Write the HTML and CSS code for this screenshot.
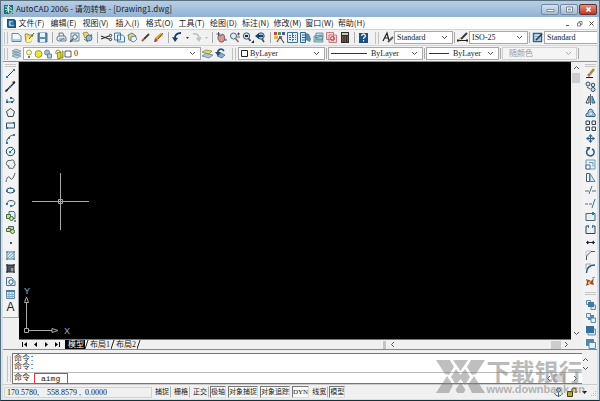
FILE: index.html
```html
<!DOCTYPE html>
<html lang="zh-CN">
<head>
  <meta charset="UTF-8" />
  <title>AutoCAD 2006 - 请勿转售 - [Drawing1.dwg]</title>
  <link rel="stylesheet" href="styles.css">
</head>
<body>
  <div class="window">
    <header class="titlebar">
      <svg class="app-icon" viewBox="0 0 10 10"><path fill="#16706f" d="M0 0h10v10H0z"/><path fill="none" stroke="#d8f0ea" d="M1 2h3v3H1M5 1l4 3M2 8l5-4M6 6h3v3H6M5 0v9"/></svg>
      <h1 class="title">AutoCAD 2006 - 请勿转售 - [Drawing1.dwg]</h1>
      <div class="caption-buttons">
        <button class="cap" aria-label="最小化"><svg viewBox="0 0 9 7"><path fill="#fff" stroke="#5b6b7d" stroke-width=".7" d="M1 3.500h7v2H1z"/></svg></button>
        <button class="cap" aria-label="还原"><svg viewBox="0 0 9 7"><path fill="#fff" stroke="#5b6b7d" stroke-width=".8" d="M1.500 1h6v5h-6zM3.500 3h2v1h-2z"/></svg></button>
        <button class="cap close" aria-label="关闭"><svg viewBox="0 0 9 7"><path fill="none" stroke="#fff" stroke-width="1.700" d="M2.500 1.500l4 4M6.500 1.500l-4 4"/></svg></button>
      </div>
    </header>

    <nav class="menubar">
      <svg class="doc-icon" viewBox="0 0 10 10"><path fill="#1d4f7c" d="M0 0h8l2 2v8H1L0 9z"/><path fill="#8ed0e8" d="M2 2h5v2H4v2h4v2H2z"/><path fill="#2b77a5" d="M5 3h3v4H5z"/></svg>
      <button class="menu">文件(F)</button>
      <button class="menu">编辑(E)</button>
      <button class="menu">视图(V)</button>
      <button class="menu">插入(I)</button>
      <button class="menu">格式(O)</button>
      <button class="menu">工具(T)</button>
      <button class="menu">绘图(D)</button>
      <button class="menu">标注(N)</button>
      <button class="menu">修改(M)</button>
      <button class="menu">窗口(W)</button>
      <button class="menu">帮助(H)</button>
      <div class="doc-buttons">
        <button aria-label="最小化文档"><svg viewBox="0 0 7 7"><path stroke="#555" d="M2 5.500h3"/></svg></button>
        <button aria-label="还原文档"><svg viewBox="0 0 7 7"><path fill="none" stroke="#667" stroke-width=".8" d="M1.500 3h3v3h-3zM3 3V1.500h3v3H4.500"/></svg></button>
        <button aria-label="关闭文档"><svg viewBox="0 0 7 7"><path stroke="#444" d="M1.500 1.500l4 4M5.500 1.500l-4 4"/></svg></button>
      </div>
    </nav>

    <div class="toolbar">
      <span class="grip"></span>
      <button class="tool" aria-label="新建"><svg viewBox="0 0 13 13"><path fill="#f4fbff" stroke="#4f7aa0" stroke-width=".9" d="M2 2.500h6l3 2.500v5.500H2z"/><path fill="#a9cfe6" d="M3 8h7v2H3z"/></svg></button>
      <button class="tool" aria-label="打开"><svg viewBox="0 0 13 13"><path fill="#efd766" stroke="#8e7a22" stroke-width=".8" d="M2 3h3l1 1h4l-2 7H3z"/><path fill="#fbf1a8" d="M5 6h6l-3 5H3z"/><path stroke="#3a6b35" d="M6 8l5-6"/></svg></button>
      <button class="tool" aria-label="保存"><svg viewBox="0 0 13 13"><path fill="#5c8fb8" stroke="#2e5c86" stroke-width=".8" d="M2 2h9v9H2z"/><path fill="#e6f2f9" d="M4 2h5v4H4zM4 8h5v3H4z"/></svg></button>
      <span class="sep"></span>
      <button class="tool" aria-label="打印"><svg viewBox="0 0 13 13"><path fill="#e5ebf0" stroke="#51606e" stroke-width=".8" d="M4 5V2h4l1 3M2 6l2-1h6l1 2v3H3L2 9z"/><path stroke="#5686ae" d="M4 8h6M5 10l4-3"/></svg></button>
      <button class="tool" aria-label="打印预览"><svg viewBox="0 0 13 13"><path fill="#e2f1f8" stroke="#3c739c" stroke-width=".8" d="M3 2h8v8H3z"/><circle cx="7" cy="6" r="2.300" fill="#fff" stroke="#4d6070"/><path stroke="#555" stroke-width="1.400" d="M5 8l-3 3"/></svg></button>
      <button class="tool" aria-label="发布"><svg viewBox="0 0 13 13"><path fill="#efdc6a" stroke="#806d2b" stroke-width=".7" d="M2 2l4-1 2 3-4 3z"/><circle cx="8" cy="7" r="3" fill="#8fb9d5" stroke="#35617f" stroke-width=".8"/><path stroke="#806d2b" d="M3 8l4 3M10 3l1 2"/></svg></button>
      <span class="sep"></span>
      <button class="tool" aria-label="剪切"><svg viewBox="0 0 13 13"><path stroke="#333" stroke-width="1.200" d="M1 5l8 3M1 8l8-3"/><g fill="none" stroke="#333"><circle cx="10.500" cy="4.500" r="1.200"/><circle cx="10.500" cy="8.500" r="1.200"/></g></svg></button>
      <button class="tool" aria-label="复制"><svg viewBox="0 0 13 13"><path fill="#e6f3fa" stroke="#35709c" stroke-width=".9" d="M1.500 2h6v7h-6zM4.500 4h5l2 2v5h-7z"/></svg></button>
      <button class="tool" aria-label="粘贴"><svg viewBox="0 0 13 13"><path fill="#d6d49b" stroke="#666539" stroke-width=".8" d="M2 4l4-2 4 3-2 5-5-1z"/><path fill="#edf5fa" stroke="#45708e" stroke-width=".8" d="M5 6l4-1 2 3-3 3-3-1z"/></svg></button>
      <button class="tool" aria-label="特性匹配"><svg viewBox="0 0 13 13"><path stroke="#4b3a32" stroke-width="1.800" d="M5 8l5-5"/><path stroke="#a05b32" stroke-width="2" d="M3 10l2-2"/></svg></button>
      <button class="tool" aria-label="块编辑器"><svg viewBox="0 0 13 13"><path stroke="#d7ab29" stroke-width="3" d="M4 8l6-5"/><path stroke="#6b482f" d="M6 8l5-6"/><path fill="#bc4634" d="M2 11l1-4 3 2-2 2z"/></svg></button>
      <span class="sep"></span>
      <button class="tool" aria-label="放弃"><svg viewBox="0 0 13 13"><path fill="none" stroke="#173f72" stroke-width="1.800" d="M10 2C6 2 3.500 4 4 8"/><path fill="#173f72" d="M1 6l3 5 3-4z"/></svg></button>
      <button class="tool drop" aria-label="放弃列表"><svg viewBox="0 0 6 13"><path fill="#333" d="M2 6h3L3.500 8z"/></svg></button>
      <button class="tool" aria-label="重做"><svg viewBox="0 0 13 13"><path fill="none" stroke="#bbc1c8" stroke-width="1.600" d="M3 3c4-1 6 1 6 5"/><path fill="#bbc1c8" d="M6 7l3 4 3-5z"/></svg></button>
      <button class="tool drop" aria-label="重做列表"><svg viewBox="0 0 6 13"><path fill="#bbb" d="M2 6h3L3.500 8z"/></svg></button>
      <span class="sep"></span>
      <button class="tool" aria-label="实时平移"><svg viewBox="0 0 13 13"><path fill="#d99b91" stroke="#7b4344" stroke-width=".8" d="M3 5l1-1 2 1 1-2 2 1 1 4-2 3H5L3 8z"/><path stroke="#384f70" d="M1.500 3h4M3.500 1v4M9 9h3"/></svg></button>
      <button class="tool" aria-label="实时缩放"><svg viewBox="0 0 13 13"><circle cx="5.500" cy="5" r="3" fill="#dcedf8" stroke="#476987"/><path stroke="#916c42" stroke-width="1.600" d="M7.500 7.500l3 3.500"/><path stroke="#333" stroke-width=".8" d="M9 3h3M10.500 1.500v3M9 6h3"/></svg></button>
      <button class="tool" aria-label="窗口缩放"><svg viewBox="0 0 13 13"><circle cx="5.500" cy="5" r="3.200" fill="#c7e0f0" stroke="#365c7e"/><path stroke="#4a4b52" stroke-width="1.600" d="M7.500 7.500l2 2.500"/><path fill="#223" d="M4 4h3v2H4zM10 12h3V9z"/></svg></button>
      <button class="tool" aria-label="缩放上一个"><svg viewBox="0 0 13 13"><circle cx="7" cy="5" r="3.200" fill="#9cc7df" stroke="#315675"/><path stroke="#49494e" stroke-width="1.600" d="M8 8l2 3"/><path fill="#123f6b" d="M1 5l4-3v2h4v2H5v2z"/></svg></button>
      <span class="sep"></span>
      <button class="tool" aria-label="特性"><svg viewBox="0 0 13 13"><path fill="#cf4447" d="M1 1h3v3H1z"/><path fill="#4a9a58" d="M5 1h3v3H5z"/><path fill="#4356a8" d="M9 1h3v3H9z"/><path fill="#dcba35" d="M1 5h4v3H1z"/><path fill="#ba4d95" d="M6 5h3v3H6z"/><path fill="none" stroke="#555" stroke-width="1.200" d="M4 11l3-5 4 6"/></svg></button>
      <button class="tool" aria-label="设计中心"><svg viewBox="0 0 13 13"><path fill="#e3f0f6" stroke="#3f7194" d="M1.500 1.500h10v10h-10z"/><path stroke="#45718e" stroke-dasharray="2 1" d="M3 4.500h7M3 6.500h7M3 8.500h7M6.500 2v9"/></svg></button>
      <button class="tool" aria-label="工具选项板"><svg viewBox="0 0 13 13"><path fill="#d7eaf4" stroke="#2b648e" d="M1.500 1.500h5v10h-5z"/><path fill="#5988ad" d="M7 2l3 1 2 5-1 3-4-2z"/><path stroke="#2b648e" d="M3 4h3M3 6.500h3M3 9h3"/></svg></button>
      <button class="tool" aria-label="图纸集"><svg viewBox="0 0 13 13"><path fill="#c2dcea" stroke="#55809e" stroke-width=".8" d="M4 2h7v6H4zM2 5l8-1 1 7H2z"/><path stroke="#538b73" d="M3 7l7-2M3 9h7"/></svg></button>
      <button class="tool" aria-label="标记集"><svg viewBox="0 0 13 13"><path fill="#f5d6d6" stroke="#cf7b80" d="M1.500 1.500h7v7h-7zM4 4h7.500v7.500H4z"/><circle cx="7.500" cy="7.500" r="2" fill="none" stroke="#c3444e"/></svg></button>
      <button class="tool" aria-label="计算器"><svg viewBox="0 0 13 13"><path fill="#302c2b" d="M3 1h8v11H3z"/><path fill="#b8d8a9" d="M4 2h6v2H4z"/><path stroke="#c97769" stroke-dasharray="1.500 1" d="M4 6h6M4 8h6M4 10h6"/></svg></button>
      <span class="sep"></span>
      <button class="tool" aria-label="帮助"><svg viewBox="0 0 13 13"><path fill="#1b4f85" d="M2 2h9v10H2z"/><path fill="none" stroke="#fff" stroke-width="1.200" d="M4.700 5c0-3 4-2 3.600.3-.3 1.200-1.800 1-1.800 2.700M6.500 9v1.500"/></svg></button>
      <span class="grip wide"></span>
      <button class="tool" aria-label="文字样式"><svg viewBox="0 0 13 13"><path fill="none" stroke="#222" stroke-width="1.200" d="M2 10l4-8 2 8M3 7h5"/><path stroke="#555" stroke-width="1.800" d="M7 11l5-5"/></svg></button>
      <span class="combo style-combo"><select aria-label="文字样式"><option>Standard</option></select><svg class="chev" viewBox="0 0 7 5"><path d="M1 1l2.500 2.500L6 1"/></svg></span>
      <span class="sep thin"></span>
      <button class="tool" aria-label="标注样式"><svg viewBox="0 0 13 13"><path stroke="#222" d="M1 9.500h11M2 8v3M11 8v3"/><path stroke="#3c3b3b" stroke-width="2" d="M5 8l6-6"/><path stroke="#b59a4a" d="M2 9l3-2"/></svg></button>
      <span class="combo style-combo"><select aria-label="标注样式"><option>ISO-25</option></select><svg class="chev" viewBox="0 0 7 5"><path d="M1 1l2.500 2.500L6 1"/></svg></span>
      <span class="sep thin"></span>
      <button class="tool" aria-label="表格样式"><svg viewBox="0 0 13 13"><path fill="#cfe5f3" stroke="#2d6692" stroke-width="1.400" d="M2.500 2.500h8v8h-8z"/><path stroke="#7ba8c8" d="M3 5.500h7M3 8h7"/><path stroke="#353535" stroke-width="1.600" d="M5 9l6-6"/></svg></button>
      <span class="combo cut-combo"><select aria-label="表格样式"><option>Standard</option></select></span>
    </div>

    <div class="toolbar second">
      <span class="grip"></span>
      <button class="tool" aria-label="图层特性管理器"><svg viewBox="0 0 13 13"><path fill="#bdd2df" stroke="#6687a0" stroke-width=".7" d="M2 9l4-2 5 2-4 2zM2 6.500l4-2 5 2-4 2zM2 4l4-2 5 2-4 2z"/></svg></button>
      <span class="combo layer-combo">
        <svg class="layer-state" viewBox="0 0 48 12"><circle cx="5" cy="4.500" r="2.500" fill="#fff9b0" stroke="#a09136" stroke-width=".8"/><path stroke="#777" stroke-width="2" d="M5 8v2"/><circle cx="14.500" cy="6" r="3.500" fill="#f3e631" stroke="#827f3b" stroke-width=".8"/><circle cx="23" cy="4.500" r="2.500" fill="#a4c2ce" stroke="#688795"/><path fill="#b5ccd5" stroke="#688795" d="M23.500 6h4v4h-4z"/><path fill="none" stroke="#8e8a25" d="M32 6V3l2-1 2 1v2"/><path fill="#e3dc34" stroke="#6e6d2a" stroke-width=".8" d="M33 5l4-1v6l-3 1zM38 3h1v7h-2"/><path fill="#fff" stroke="#333" stroke-width=".8" d="M41 3h6v6h-6z"/></svg>
        <select aria-label="图层"><option>0</option></select><svg class="chev" viewBox="0 0 7 5"><path d="M1 1l2.500 2.500L6 1"/></svg></span>
      <button class="tool" aria-label="将对象的图层置为当前"><svg viewBox="0 0 13 13"><path fill="#a9c6d9" stroke="#547c9b" stroke-width=".7" d="M1 9l4-3 7 2-4 3z"/><path fill="#e9d965" stroke="#7d7d38" stroke-width=".7" d="M1 5l4-2 6 1-3 3z"/></svg></button>
      <button class="tool" aria-label="上一个图层"><svg viewBox="0 0 13 13"><path fill="#8babc3" stroke="#456987" stroke-width=".7" d="M3 9l4-3 4 2-3 3z"/><path fill="none" stroke="#234d77" stroke-width="1.600" d="M10 4C7 0 3 3 4 7"/><path fill="#234d77" d="M1 5h6L4 9z"/></svg></button>
      <span class="grip wide"></span>
      <span class="combo color-combo"><svg class="swatch" viewBox="0 0 7 7"><path fill="#fff" stroke="#222" d="M.5.500h6v6h-6z"/></svg><select aria-label="颜色"><option>ByLayer</option></select><svg class="chev" viewBox="0 0 7 5"><path d="M1 1l2.500 2.500L6 1"/></svg></span>
      <span class="sep thin"></span>
      <span class="combo linetype-combo"><span class="line"></span><select aria-label="线型"><option>ByLayer</option></select><svg class="chev" viewBox="0 0 7 5"><path d="M1 1l2.500 2.500L6 1"/></svg></span>
      <span class="sep thin"></span>
      <span class="combo weight-combo"><span class="line"></span><select aria-label="线宽"><option>ByLayer</option></select><svg class="chev" viewBox="0 0 7 5"><path d="M1 1l2.500 2.500L6 1"/></svg></span>
      <span class="sep thin"></span>
      <span class="combo plot-combo"><select aria-label="打印样式" disabled><option>随颜色</option></select><svg class="chev" viewBox="0 0 7 5"><path d="M1 1l2.500 2.500L6 1"/></svg></span>
      <span class="sep thin"></span>
    </div>

    <main class="workspace">
      <div class="sidebar">
        <span class="hgrip"></span>
        <button class="tool" aria-label="直线"><svg viewBox="0 0 13 13"><path stroke="#246" d="M3 10l7-7"/><path fill="#2679ad" d="M2 9h2v2H2zM9 2h2v2H9z"/></svg></button>
        <button class="tool" aria-label="构造线"><svg viewBox="0 0 13 13"><path stroke="#222" stroke-width="1.200" d="M2 11l9-9"/><path fill="#222" d="M1 12l1-3 2 2zM11 1l-1 3-2-2z"/><path fill="#2679ad" d="M5 6h2v2H5z"/></svg></button>
        <button class="tool" aria-label="多段线"><svg viewBox="0 0 13 13"><path fill="none" stroke="#356b95" d="M2 9h7c2-2 1-4-2-4M3 9V6"/><path fill="#246596" d="M2 8h2v2H2zM7 8h2v2H7zM6 4h2v2H6z"/></svg></button>
        <button class="tool" aria-label="正多边形"><svg viewBox="0 0 13 13"><path fill="#edf1f4" stroke="#3f4851" d="M6.500 2.500l4 3-1.500 5H4l-1.500-5z"/></svg></button>
        <button class="tool" aria-label="矩形"><svg viewBox="0 0 13 13"><path fill="#e5f0f6" stroke="#35556e" d="M2.500 4h8v5h-8z"/><path fill="#2679ad" d="M2 8h2v2H2zM9 3h2v2H9z"/></svg></button>
        <button class="tool" aria-label="圆弧"><svg viewBox="0 0 13 13"><path fill="none" stroke="#365b78" d="M2.500 11c0-4 3-8 8-8"/><path fill="#2679ad" d="M2 10h2v2H2zM4 5h2v2H4zM9 2h2v2H9z"/></svg></button>
        <button class="tool" aria-label="圆"><svg viewBox="0 0 13 13"><circle cx="6.500" cy="6.500" r="4.200" fill="#e7f2f7" stroke="#234968"/><path stroke="#2679ad" d="M6 7l3-3"/><path fill="#2679ad" d="M5 6h2v2H5z"/></svg></button>
        <button class="tool" aria-label="修订云线"><svg viewBox="0 0 13 13"><path fill="#edf1f4" stroke="#485663" d="M3 4c0-2 3-2 3-1 2-2 5-1 4 2 2 1 1 3 0 3 0 3-2 3-3 2-2 1-3 0-2-2-3 0-3-3-2-4z"/></svg></button>
        <button class="tool" aria-label="样条曲线"><svg viewBox="0 0 13 13"><path fill="none" stroke="#4d555c" d="M2 11c1-6 3-6 4-4s3 2 5-5"/></svg></button>
        <button class="tool" aria-label="椭圆"><svg viewBox="0 0 13 13"><ellipse cx="6.500" cy="6.500" rx="4" ry="2.500" fill="#edf5fa" stroke="#274a68"/><path fill="#2679ad" d="M2 6h2v2H2zM9 6h2v2H9zM6 3h1v2H6z"/></svg></button>
        <button class="tool" aria-label="椭圆弧"><svg viewBox="0 0 13 13"><path fill="none" stroke="#35536c" d="M3 7c0-5 8-4 8-1 0 2-2 3-4 3"/><path fill="#2679ad" d="M2 6h2v2H2zM6 8h2v2H6z"/></svg></button>
        <button class="tool" aria-label="插入块"><svg viewBox="0 0 13 13"><path fill="#e4eff5" stroke="#477394" d="M5 1.500h5l1 2v5H5z"/><path fill="#d4de73" stroke="#3d6c41" d="M2.500 4.500h4v4h-4z"/><circle cx="7.500" cy="8.500" r="2" fill="#c3dd94" stroke="#3d6c41"/><path stroke="#222" d="M10 11h2"/></svg></button>
        <button class="tool" aria-label="创建块"><svg viewBox="0 0 13 13"><path fill="#b5c7d3" stroke="#4c6573" d="M4.500 3.500h5v3h-5z"/><path fill="#dfe36d" stroke="#49713a" d="M2.500 5.500h4v3h-4z"/><circle cx="8.500" cy="8.500" r="2" fill="#d3e09a" stroke="#49713a"/></svg></button>
        <button class="tool" aria-label="点"><svg viewBox="0 0 13 13"><path fill="#245b80" d="M6 6h2v2H6z"/></svg></button>
        <button class="tool" aria-label="图案填充"><svg viewBox="0 0 13 13"><path fill="#bdddec" stroke="#467695" d="M3 2v9M10 2v9M2 3h9M2 10h9"/><path fill="#cfe6f1" d="M4 4h5v5H4z"/><path stroke="#79a9c4" d="M4 9l5-5M4 6l2-2M7 9l2-2"/></svg></button>
        <button class="tool" aria-label="渐变色"><svg viewBox="0 0 13 13"><path fill="#485563" d="M3 3h7v7H3z"/><path fill="#a29d78" d="M7 6h3v4H7z"/><path stroke="#222b34" d="M3 2v9M10 2v9M2 3h9M2 10h9"/></svg></button>
        <button class="tool" aria-label="面域"><svg viewBox="0 0 13 13"><path fill="#e4f0f7" stroke="#4b7899" d="M2.500 2.500h5l3.500 4v4H2.500z"/><circle cx="7" cy="7" r="2.200" fill="#fff" stroke="#355f83"/></svg></button>
        <button class="tool" aria-label="表格"><svg viewBox="0 0 13 13"><path fill="#dcebf4" stroke="#5687b0" d="M2.500 2.500h8v8h-8z"/><path fill="#497fab" d="M2 2h9v2H2z"/><path stroke="#82abc7" d="M2 6.500h9M2 8.500h9M5 4v6M8 4v6"/></svg></button>
        <button class="tool letter" aria-label="多行文字">A</button>
      </div>

      <section class="drawing">
        <div class="canvas">
          <svg class="crosshair" viewBox="0 0 57 57"><path d="M0 28.500h57M28.500 0v57M26.500 26.500h4v4h-4z"/></svg>
          <svg class="ucs" viewBox="0 0 50 50"><path d="M2.500 45.500h4v-4h-4zM4.500 41V15M2.500 15.500L4.500 10 6.500 15.500zM7 43.500h23M30 41.500l6 2-6 2z"/><text x="2" y="7">Y</text><text x="42" y="47">X</text></svg>
        </div>
        <div class="vscroll">
          <button aria-label="向上"><svg viewBox="0 0 7 5"><path d="M1 4l2.500-2.500L6 4"/></svg></button>
          <span class="thumb"></span>
          <button class="down" aria-label="向下"><svg viewBox="0 0 7 5"><path d="M1 1l2.500 2.500L6 1"/></svg></button>
        </div>
        <div class="tabs">
          <button class="step" aria-label="第一个"><svg viewBox="0 0 7 7"><path d="M1 1h1v5H1zM6 1v5L3 3.500z"/></svg></button>
          <button class="step" aria-label="上一个"><svg viewBox="0 0 7 7"><path d="M5 1v5L2 3.500z"/></svg></button>
          <button class="step" aria-label="下一个"><svg viewBox="0 0 7 7"><path d="M2 1v5l3-2.500z"/></svg></button>
          <button class="step" aria-label="最后一个"><svg viewBox="0 0 7 7"><path d="M1 1v5l3-2.500zM5 1h1v5H5z"/></svg></button>
          <button class="tab active">模型</button><svg class="slash" viewBox="0 0 4 9"><path d="M0 9l3-9"/></svg>
          <button class="tab">布局1</button><svg class="slash" viewBox="0 0 4 9"><path d="M0 9l3-9"/></svg>
          <button class="tab">布局2</button><svg class="slash" viewBox="0 0 4 9"><path d="M0 9l3-9"/></svg>
          <div class="hscroll">
            <span class="splitter"></span>
            <button aria-label="向左"><svg viewBox="0 0 5 7"><path d="M4 1L1.500 3.500 4 6"/></svg></button>
            <span class="thumb"></span>
            <button aria-label="向右"><svg viewBox="0 0 5 7"><path d="M1 1l2.500 2.500L1 6"/></svg></button>
          </div>
        </div>
        <span class="corner"></span>
      </section>

      <div class="sidebar right">
        <span class="hgrip"></span>
        <button class="tool" aria-label="删除"><svg viewBox="0 0 13 13"><path stroke="#9b8f3a" stroke-width="2.500" d="M6 7l4-5"/><path stroke="#c26a67" stroke-width="2.500" d="M4 9l2-2"/><path stroke="#222" d="M2 10.500h7"/></svg></button>
        <button class="tool" aria-label="复制对象"><svg viewBox="0 0 13 13"><g fill="#cfe4ef" stroke="#344f65"><circle cx="4" cy="4" r="2"/><circle cx="9" cy="5" r="1.800"/><circle cx="9" cy="9.500" r="2"/></g><path stroke="#344f65" d="M3 7l3 2"/></svg></button>
        <button class="tool" aria-label="镜像"><svg viewBox="0 0 13 13"><path fill="#fff" stroke="#33475a" d="M5 3v7H2z"/><path fill="#83b3d1" stroke="#33668e" d="M8 3v7h3z"/><path stroke="#33475a" stroke-width=".8" d="M6.500 1v11"/></svg></button>
        <button class="tool" aria-label="偏移"><svg viewBox="0 0 13 13"><path fill="#a9cde1" stroke="#35658a" d="M2 10.500V8l2-1c0-5 5-5 5-1l2 2v2.500z"/><path fill="#eef6fa" stroke="#6796b5" stroke-width=".7" d="M4 9l2-3h2l1 3z"/></svg></button>
        <button class="tool" aria-label="阵列"><svg viewBox="0 0 13 13"><path fill="#eef3f6" stroke="#333f4a" d="M2 2h3.500v3.500H2zM8 2h3.500v3.500H8zM2 8h3.500v3.500H2zM8 8h3.500v3.500H8z"/></svg></button>
        <button class="tool" aria-label="移动"><svg viewBox="0 0 13 13"><path stroke="#285c87" stroke-width="1.200" d="M6.500 3v7M3 6.500h7"/><path fill="#285c87" d="M6.500 2l2 2.500h-4zM6.500 11l2-2.500h-4zM2 6.500l2.500-2v4zM11 6.500l-2.500-2v4z"/></svg></button>
        <button class="tool" aria-label="旋转"><svg viewBox="0 0 13 13"><path fill="none" stroke="#285c87" stroke-width="1.400" d="M4 4c-3 3-1 7 3 7 4-1 4-6 1-7"/><path fill="#285c87" d="M2 2h4.500L5 5.500z"/></svg></button>
        <button class="tool" aria-label="缩放"><svg viewBox="0 0 13 13"><path fill="#e4f1f7" stroke="#6c99b5" d="M2 2h9v9H2z"/><path fill="#fff" stroke="#3e6c8c" d="M2 7h4v4H2z"/><path fill="none" stroke="#6c99b5" d="M5 4.500h4v4"/></svg></button>
        <button class="tool" aria-label="拉伸"><svg viewBox="0 0 13 13"><path fill="#f2f7fa" stroke="#415a6d" d="M2.500 2.500h3v8h-3z"/><path fill="#d9e9f2" stroke="#5d87a6" d="M6 2.500l5 8H6z"/></svg></button>
        <button class="tool" aria-label="修剪"><svg viewBox="0 0 13 13"><path stroke="#4d6f8b" d="M1 7h4M8 7h4M5 10l3-8"/></svg></button>
        <button class="tool" aria-label="延伸"><svg viewBox="0 0 13 13"><path stroke="#4d6f8b" d="M1 7h3M5 7h3M8 11l3-9"/></svg></button>
        <button class="tool" aria-label="打断于点"><svg viewBox="0 0 13 13"><path fill="#e7f0f5" stroke="#55616b" d="M2 3.500h9v7H2z"/><path fill="#327aaa" d="M8 2h2v3H8z"/></svg></button>
        <button class="tool" aria-label="打断"><svg viewBox="0 0 13 13"><path fill="#e7f0f5" stroke="#35414b" d="M5 3H2v7.500h9V3H8"/><path fill="#327aaa" d="M4 2h1v3H4zM8 2h1v3H8z"/></svg></button>
        <button class="tool" aria-label="合并"><svg viewBox="0 0 13 13"><path stroke="#222f38" d="M2 6.500h9"/><path fill="#222f38" d="M6 6.500l-3-2v4zM7 6.500l3-2v4z"/></svg></button>
        <button class="tool" aria-label="倒角"><svg viewBox="0 0 13 13"><path fill="none" stroke="#4c5862" d="M2.500 11V7L7 2.500h4"/><path fill="none" stroke="#9ab" stroke-width=".6" d="M2 7V2h5"/></svg></button>
        <button class="tool" aria-label="圆角"><svg viewBox="0 0 13 13"><path fill="none" stroke="#27628d" stroke-width="1.400" d="M2.500 11c0-5 3-8 8.500-8"/><path fill="none" stroke="#777" stroke-width=".6" d="M2 7V2h5"/></svg></button>
        <button class="tool" aria-label="分解"><svg viewBox="0 0 13 13"><path fill="#994a30" d="M2 4l3 1 2 1 3-3-1 4 1 3-4-1-4 2 1-4z"/><path fill="#edb64a" d="M4 7l3-1-1 3H4z"/><path stroke="#999" d="M8 3l3-1"/></svg></button>
        <span class="hgrip"></span>
        <button class="tool" aria-label="前置"><svg viewBox="0 0 13 13"><path fill="#d9e7ef" stroke="#5f8ead" d="M2.500 2.500h4v4h-4zM7 7h4.500v4.500H7z"/><path fill="#41799f" d="M4 4h6v5H4z"/></svg></button>
        <button class="tool" aria-label="后置"><svg viewBox="0 0 13 13"><path fill="#5088ae" d="M4 4h6v5H4z"/><path fill="#e1edf4" stroke="#5f8ead" d="M2.500 2.500h4v4h-4zM7 7h4.500v4.500H7z"/></svg></button>
        <button class="tool" aria-label="置于对象之上"><svg viewBox="0 0 13 13"><path fill="#cfe1eb" stroke="#6b93ae" d="M4 5h7.500v6H4z"/><path fill="#34719c" d="M2 2h8v7H2z"/></svg></button>
        <button class="tool" aria-label="置于对象之下"><svg viewBox="0 0 13 13"><path fill="#4f88ae" d="M2 2h8v7H2z"/><path fill="#e4eff5" stroke="#5e8cac" d="M5 5.500h6.500v6H5z"/></svg></button>
      </div>
    </main>

    <section class="command">
      <span class="grip tall"></span>
      <div class="command-body">
        <div class="history"><p>命令：</p><p>命令：</p></div>
        <div class="prompt"><label for="cmd">命令</label><input id="cmd" value="aimg" /><button class="left" aria-label="向左"><svg viewBox="0 0 5 7"><path d="M4 1L1.500 3.500 4 6"/></svg></button><span class="thumb"></span><button aria-label="向右"><svg viewBox="0 0 5 7"><path d="M1 1l2.500 2.500L1 6"/></svg></button></div>
      </div>
      <div class="command-scroll">
        <button aria-label="向上"><svg viewBox="0 0 7 5"><path d="M1 4l2.500-2.500L6 4"/></svg></button>
        <button aria-label="向下"><svg viewBox="0 0 7 5"><path d="M1 1l2.500 2.500L6 1"/></svg></button>
      </div>
    </section>

    <footer class="status">
      <output class="coords">170.5780,&nbsp;&nbsp;&nbsp; 558.8579 ,&nbsp; 0.0000</output>
      <button class="mode">捕捉</button>
      <button class="mode">栅格</button>
      <button class="mode">正交</button>
      <button class="mode on">极轴</button>
      <button class="mode on">对象捕捉</button>
      <button class="mode on">对象追踪</button>
      <button class="mode on">DYN</button>
      <button class="mode">线宽</button>
      <button class="mode on">模型</button>
      <div class="tray">
        <svg class="tray-icon" viewBox="0 0 11 11"><circle cx="5.500" cy="3" r="2" fill="#bfd3e8" stroke="#47658a"/><path fill="none" stroke="#47658a" d="M5.500 5v5M1.500 6c1 4 7 4 8 0"/></svg>
        <svg class="tray-icon" viewBox="0 0 11 11"><path fill="#b9ab22" stroke="#433f15" d="M1.500 4.500h5v5h-5z"/><path fill="none" stroke="#5c561b" stroke-width="1.200" d="M6 5V2l2-1 2 1v4"/></svg>
        <button class="tray-menu" aria-label="状态栏菜单"><svg viewBox="0 0 7 5"><path fill="#111" d="M1 1h5L3.500 4z"/></svg></button>
        <svg class="resize" viewBox="0 0 7 7"><path stroke="#bbb" stroke-dasharray="1 1" d="M1 6.500h6M3 4.500h4M5 2.500h2"/></svg>
      </div>
    </footer>

    <div class="watermark">
      <svg class="mark" viewBox="0 0 49 33">
        <path d="M0 0h14l4 7-5 8L9 14zM35 0h14l-9 14-4 1-5-8zM17 0h15l-7.500 11zM0 33l11-17 6 9-4 8zM49 33L38 16l-6 9 4 8z"/>
        <path d="M20 9l4.500 6L29 9l5 8-5 8-4.500-6-4.500 6-5-8z"/>
        <path d="M24.500 22l5 8-2 3h-6l-2-3z"/>
      </svg>
      <div><strong>下载银行</strong><span>www.downbank.cn</span></div>
    </div>
  </div>
</body>
</html>
```
FILE: styles.css
```css
* { box-sizing: border-box; }
html, body { height: 100%; }
body { margin: 0; background: #12313b; font-family: "Noto Sans CJK SC", sans-serif; font-size: 8px; line-height: 10px; color: #222; }
button { margin: 0; padding: 0; border: 0; background: none; font: inherit; color: inherit; }
svg { display: block; }
p, h1 { margin: 0; }

.window { position: relative; display: flex; flex-direction: column; height: 100vh; padding: 0 2px 1px; border: 1px solid #59717f; border-bottom-color: #12313b; background: #d3e1ee; overflow: hidden; }

.titlebar { display: flex; align-items: center; height: 16px; flex: none; margin: 0 -2px; padding: 0 0 0 3px; background: linear-gradient(#b9cee5, #91b2d5); }
.app-icon { width: 9px; height: 9px; }
.title { flex: 1; margin-left: 3px; font-size: 8px; font-weight: normal; white-space: nowrap; }
.caption-buttons { display: flex; align-self: flex-start; margin: 3px 2px 0 0; gap: 1px; }
.cap { display: flex; align-items: center; justify-content: center; width: 18px; height: 11px; border: 1px solid #7189a3; border-radius: 2px; background: linear-gradient(#d5e2ef, #a5bdd6); }
.cap svg { width: 9px; height: 7px; }
.cap.close { border-color: #6b2d27; background: linear-gradient(#df9482, #bf3825); }

.menubar { display: flex; align-items: center; height: 12px; flex: none; padding-left: 4px; background: #fff; }
.doc-icon { width: 9px; height: 9px; margin-right: 0; }
.menu { width: 31px; margin-right: 1px; white-space: nowrap; }
.doc-buttons { display: flex; gap: 5px; margin-left: auto; padding-right: 2px; }
.doc-buttons svg { width: 7px; height: 7px; }

.toolbar { display: flex; align-items: center; height: 16px; flex: none; border-top: 1px solid #d5d5d5; background: #f1f1f1; overflow: hidden; }
.second { border-bottom: 1px solid #8e8e8e; height: 17px; }
.grip { width: 4px; height: 12px; flex: none; margin: 0 2px 0 1px; border: solid #c2c2c2; border-width: 0 1px; }
.grip.wide { margin: 0 2px 0 5px; }
.tool { display: block; width: 13px; height: 13px; flex: none; }
.tool svg { width: 13px; height: 13px; }
.tool.drop, .tool.drop svg { width: 6px; }
.sep { width: 1px; height: 11px; flex: none; margin: 0 2px 0 3px; background: #aaa; }
.sep.thin { margin: 0 1px; }
.combo { position: relative; display: flex; height: 13px; flex: none; border: 1px solid #a8a8a8; background: #fff; }
.combo select { flex: 1; width: 100%; min-width: 0; padding: 0 2px; border: 0; background: none; appearance: none; font: 8px/10px "Liberation Serif", "Noto Sans CJK SC", serif; color: #222; opacity: 1; }
.chev { position: absolute; right: 4px; top: 3px; width: 7px; height: 5px; pointer-events: none; }
.chev path, .vscroll path, .hscroll path, .prompt path, .command-scroll path { fill: none; stroke: #555; }
.style-combo { width: 59px; }
.cut-combo { flex: 1; border-right: 0; }
.layer-combo { width: 178px; }
.layer-combo select { padding-left: 50px; }
.layer-state { position: absolute; left: 0; top: 0; width: 48px; height: 12px; }
.color-combo { width: 87px; }
.swatch { position: absolute; left: 2px; top: 2px; width: 7px; height: 7px; }
.color-combo select { padding-left: 11px; }
.linetype-combo { width: 95px; }
.weight-combo { width: 73px; }
.line { width: 36px; height: 1px; flex: none; margin: 5px 2px 0 2px; background: #333; }
.weight-combo .line { width: 20px; }
.plot-combo { width: 75px; border-color: #d0d0d0; background: #f5f5f5; }
.plot-combo select { padding-left: 6px; color: #999; }
.plot-combo path { stroke: #aaa; }

.workspace { display: flex; flex: 1; min-height: 0; background: #f0f0f0; }
.sidebar { display: flex; flex-direction: column; align-items: center; align-self: flex-start; width: 16px; flex: none; padding-bottom: 3px; background: #f3f3f3; border: solid #a5a5a5; border-width: 0 1px 1px 0; }
.hgrip { width: 11px; height: 3px; flex: none; margin: 2px 0 0; border: solid #c5c5c5; border-width: 1px 0; }
.letter { font: 12px/13px "Liberation Sans", sans-serif; }
.sidebar.right { align-self: stretch; width: 14px; border: 0; }
.sidebar.right .hgrip ~ .hgrip { margin: 4px 0 3px; }

.drawing { display: grid; grid-template: 1fr 10px / 1fr 12px; flex: 1; min-width: 0; }
.canvas { position: relative; background: #000; }
.crosshair { position: absolute; left: 13px; top: 111px; width: 57px; height: 57px; fill: none; stroke: #a9a9a9; }
.ucs { position: absolute; left: 3px; bottom: 2px; width: 50px; height: 50px; overflow: visible; fill: none; stroke: #aaa; }
.ucs text { font: 9px "Liberation Sans", sans-serif; fill: #aaa; stroke: none; }
.vscroll { display: flex; flex-direction: column; align-items: center; padding: 3px 2px 3px 0; background: #f0f0f0; }
.vscroll svg, .command-scroll svg { width: 7px; height: 5px; }
.vscroll .thumb { width: 8px; height: 10px; margin-top: 3px; background: #cdcdcd; }
.vscroll .down { margin-top: auto; }
.tabs { display: flex; align-items: center; border-top: 1px solid #777; background: #f0f0f0; }
.step { width: 11px; padding-left: 2px; }
.step svg { width: 7px; height: 7px; }
.tab { height: 9px; padding: 0 1px; font-family: "Liberation Serif", "Noto Sans CJK SC", serif; line-height: 9px; white-space: nowrap; }
.tab.active { margin-left: 2px; padding: 0 1px 0 3px; background: #000; color: #fff; }
.slash { width: 4px; height: 9px; fill: none; stroke: #222; }
.hscroll { display: flex; align-items: center; width: 188px; height: 9px; margin-left: auto; }
.hscroll svg, .prompt svg { width: 5px; height: 7px; }
.splitter { width: 3px; height: 8px; margin-right: 4px; background: #c5c5c5; }
.hscroll .thumb { width: 10px; height: 8px; margin: 0 3px 0 auto; background: #cdcdcd; }
.hscroll button:last-child { margin-right: 2px; }

.command { display: flex; height: 35px; flex: none; padding: 3px 0 0; border-top: 1px solid #888; background: #f0f0f0; }
.grip.tall { height: 26px; margin: 3px 1px 0 4px; }
.command-body { display: flex; flex-direction: column; flex: 1; border: solid #777; border-width: 1px 0 1px 1px; background: #fff; font: 8px/8px "Liberation Mono", "Noto Sans CJK SC", monospace; }
.history { flex: 1; padding: 1px; color: #333; }
.prompt { display: flex; align-items: center; height: 11px; padding: 0 4px 0 1px; border-top: 1px solid #bbb; }
.prompt input { width: 34px; height: 11px; margin-left: 4px; padding: 0 0 0 6px; border: 1px solid #e13b3b; background: #fff; font: 8px/9px "Liberation Mono", monospace; color: #222; }
.prompt .left { margin-left: auto; }
.prompt .thumb { width: 12px; height: 8px; margin: 0 8px 0 2px; background: #d5d5d5; }
.command-scroll { display: flex; flex-direction: column; gap: 4px; padding: 4px 8px 0 0; }

.status { display: flex; align-items: center; height: 15px; flex: none; padding-left: 1px; border-top: 1px solid #ccc; background: #f0f0f0; font: 8px/10px "Liberation Serif", "Noto Sans CJK SC", serif; }
.coords { width: 148px; height: 11px; padding-left: 2px; border: 1px solid #d2d2d2; white-space: nowrap; }
.mode { height: 12px; margin-left: 1px; padding: 0 1px; border: 1px solid transparent; border-right-color: #b5b5b5; font-size: 7px; white-space: nowrap; }
.mode.on { padding: 0; border-color: #777 #ddd #ddd #777; background: #fafafa; }
.mode.on + .mode.on { margin-left: 2px; }
.tray { display: flex; align-items: center; gap: 2px; margin-left: auto; }
.tray-icon { width: 11px; height: 11px; }
.tray-menu svg, .resize { width: 7px; }
.tray-menu { margin-left: 2px; }

.watermark { position: absolute; right: 14px; bottom: 6px; display: flex; gap: 1px; color: #777; opacity: .5; pointer-events: none; }
.mark { width: 49px; height: 33px; fill: #808080; }
.watermark strong { display: block; font: bold 24px/22px "Noto Sans CJK SC", sans-serif; }
.watermark span { display: block; margin-top: 2px; font: bold 11px/10px "Liberation Sans", sans-serif; }
```
